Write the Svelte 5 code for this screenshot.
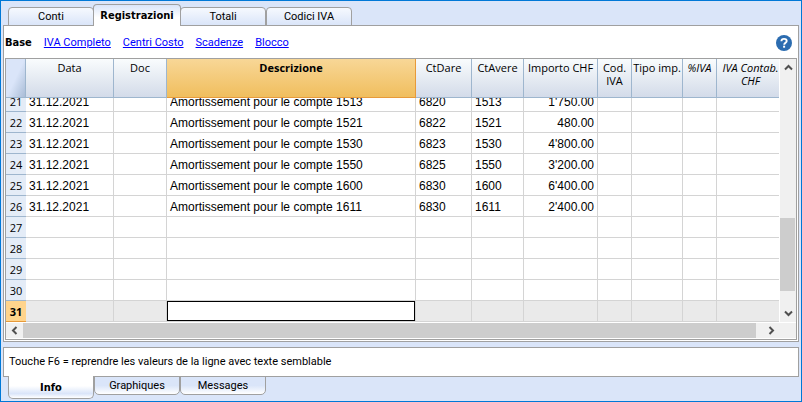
<script>
  const tabs = ['Conti', 'Registrazioni', 'Totali', 'Codici IVA'];
  const views = ['IVA Completo', 'Centri Costo', 'Scadenze', 'Blocco'];
  const bottomTabs = ['Info', 'Graphiques', 'Messages'];
  const columns = [
    { label: 'Data', width: 88 },
    { label: 'Doc', width: 53 },
    { label: 'Descrizione', width: 249, selected: true },
    { label: 'CtDare', width: 56 },
    { label: 'CtAvere', width: 52 },
    { label: 'Importo CHF', width: 74 },
    { label: 'Cod. IVA', width: 34 },
    { label: 'Tipo imp.', width: 51 },
    { label: '%IVA', width: 34, computed: true },
    { label: 'IVA Contab. CHF', computed: true }
  ];
  const entry = (n, debit, account, amount) => ({
    n,
    cells: ['31.12.2021', '', `Amortissement pour le compte ${account}`, debit, account, amount, '', '', '', '']
  });
  const rows = [
    entry(21, '6820', '1513', "1'750.00"),
    entry(22, '6822', '1521', '480.00'),
    entry(23, '6823', '1530', "4'800.00"),
    entry(24, '6825', '1550', "3'200.00"),
    entry(25, '6830', '1600', "6'400.00"),
    entry(26, '6830', '1611', "2'400.00"),
    ...[27, 28, 29, 30, 31].map((n) => ({ n, cells: Array(10).fill('') }))
  ];
  const currentRow = 31;
  let activeTab = $state('Registrazioni');
  let activeBottom = $state('Info');
</script>

<main class="window">
  <nav class="tabs top">
    {#each tabs as tab}
      <button class:active={tab === activeTab} onclick={() => (activeTab = tab)}>{tab}</button>
    {/each}
  </nav>

  <section class="pane">
    <div class="views">
      <strong>Base</strong>
      {#each views as view}
        <a href="#view">{view}</a>
      {/each}
      <button class="help" aria-label="Help">
        <svg width="16" height="16" viewBox="0 0 16 16">
          <circle cx="8" cy="8" r="8" fill="#2b6cb0" />
          <path d="M5.4 6.2C5.5 4.6 6.5 3.9 8 3.9c1.6 0 2.7.8 2.7 2.1 0 1.6-2.5 1.8-2.5 3.7" fill="none" stroke="#fff" stroke-width="1.9" />
          <rect x="7.1" y="10.7" width="2" height="2" fill="#fff" />
        </svg>
      </button>
    </div>

    <div class="grid">
      <div class="middle">
        <div class="viewport">
          <table>
            <colgroup>
              <col style:width="20px" />
              {#each columns as col}
                <col style:width={col.width ? `${col.width}px` : 'auto'} />
              {/each}
            </colgroup>
            <thead>
              <tr>
                <th class="corner"></th>
                {#each columns as col}
                  <th class:selected={col.selected} class:computed={col.computed}>{col.label}</th>
                {/each}
              </tr>
            </thead>
            <tbody>
              {#each rows as row, r}
                <tr class:clipped={r === 0} class:current={row.n === currentRow}>
                  <th><div>{row.n}</div></th>
                  {#each row.cells as cell, c}
                    {#if row.n === currentRow && c === 2}
                      <td class="editing"><input aria-label="Descrizione" /></td>
                    {:else}
                      <td class:amount={c === 5}><div>{cell}</div></td>
                    {/if}
                  {/each}
                </tr>
              {/each}
            </tbody>
          </table>
        </div>
        <div class="scroll vertical">
          <button aria-label="Scroll up"><svg width="9" height="7" viewBox="0 0 9 7"><path d="M1 5.5 4.5 2 8 5.5" /></svg></button>
          <div class="track"><div class="thumb"></div></div>
          <button aria-label="Scroll down"><svg width="9" height="7" viewBox="0 0 9 7"><path d="M1 1.5 4.5 5 8 1.5" /></svg></button>
        </div>
      </div>
      <div class="scroll horizontal">
        <button aria-label="Scroll left"><svg width="7" height="9" viewBox="0 0 7 9"><path d="M5.5 1 2 4.5 5.5 8" /></svg></button>
        <div class="track"><div class="thumb"></div></div>
        <button aria-label="Scroll right"><svg width="7" height="9" viewBox="0 0 7 9"><path d="M1.5 1 5 4.5 1.5 8" /></svg></button>
      </div>
    </div>
  </section>

  <section class="info">Touche F6 = reprendre les valeurs de la ligne avec texte semblable</section>

  <nav class="tabs bottom">
    {#each bottomTabs as tab}
      <button class:active={tab === activeBottom} onclick={() => (activeBottom = tab)}>{tab}</button>
    {/each}
  </nav>
</main>

<style>
  :global(body) {
    background: #dae5f9;
  }
  * {
    box-sizing: border-box;
  }
  button {
    font: inherit;
    color: inherit;
    padding: 0;
    border: 0;
    background: none;
  }
  .window {
    min-height: 100vh;
    padding: 3px 2px 0;
    border: 1px solid #0078d7;
    background: #dae5f9;
    color: #000;
    font: 11px/14px Roboto, 'Noto Sans', sans-serif;
  }
  .tabs {
    display: flex;
    padding: 0 5px;
  }
  .tabs button {
    width: 86px;
    height: 18px;
    border: 1px solid #a0a0a0;
  }
  .tabs button.active {
    font-family: 'DejaVu Sans Condensed', 'DejaVu Sans', sans-serif;
    font-weight: bold;
    position: relative;
  }
  .top {
    align-items: flex-end;
    margin-bottom: -1px;
  }
  .top button {
    height: 19px;
    padding-top: 1px;
    border-radius: 4px 4px 0 0;
    background: linear-gradient(#f6f9fe, #dae5f9);
  }
  .top button.active {
    width: 88px;
    height: 22px;
    margin: 0 -1px;
    border-bottom: 0;
    background: linear-gradient(#dae5f9, #fff 60%);
  }
  .bottom {
    align-items: flex-start;
    margin-top: -1px;
  }
  .bottom button {
    height: 19px;
    border-radius: 0 0 5px 5px;
    background: linear-gradient(#dae5f9, #dae5f9 50%, #fff);
  }
  .bottom button.active {
    height: 23px;
    padding-top: 2px;
    border-top: 0;
    background: linear-gradient(#fff 45%, #dae5f9 80%, #fff);
  }
  .pane {
    border: 1px solid #a0a0a0;
    background: #fff;
    padding: 0 1px 1px;
  }
  .views {
    display: flex;
    align-items: center;
    gap: 12px;
    height: 32px;
    padding: 2px 5px 0 0;
  }
  .views strong {
    font-family: 'DejaVu Sans Condensed', 'DejaVu Sans', sans-serif;
  }
  .views a {
    color: #0000ff;
  }
  .help {
    margin-left: auto;
    width: 16px;
    height: 16px;
  }
  .help svg {
    display: block;
  }
  .grid {
    border: 1px solid #a0a0a0;
    background: #fff;
  }
  .middle {
    display: flex;
  }
  .viewport {
    flex: 1;
    min-width: 0;
    overflow: hidden;
    margin-right: 1px;
  }
  table {
    width: calc(100% + 6px);
    table-layout: fixed;
    border-collapse: separate;
    border-spacing: 0;
  }
  thead th {
    height: 39px;
    padding: 2px 0 0;
    vertical-align: top;
    font: 11px/13px 'Open Sans', 'Noto Sans', sans-serif;
    border-right: 1px solid #9eb6ce;
    border-bottom: 1px solid #9eb6ce;
    background: linear-gradient(#f9fcfd, #d3dbe9);
  }
  thead .selected {
    font-weight: bold;
    background: linear-gradient(#f8d797, #f0be5e);
    border-right-color: #e79a3a;
    border-bottom-color: #e79a3a;
  }
  thead .computed {
    font-style: italic;
  }
  thead .corner {
    background: linear-gradient(115deg, #dae5f9 50%, #a9bcd6);
  }
  tbody th {
    height: 21px;
    padding: 2px 0 0;
    font: 11px/18px 'Open Sans', 'Noto Sans', sans-serif;
    background: #e4ecf7;
    border-bottom: 1px solid #9eb6ce;
  }
  td {
    height: 21px;
    padding: 2px 3px 0;
    font: 12px/18px 'Liberation Sans', Arial, sans-serif;
    white-space: nowrap;
    border-right: 1px solid #d4d4d4;
    border-bottom: 1px solid #d4d4d4;
  }
  .amount {
    text-align: right;
  }
  .clipped th,
  .clipped td {
    height: 14px;
    padding-top: 0;
  }
  .clipped div {
    display: flex;
    align-items: flex-end;
    justify-content: flex-start;
    height: 13px;
    overflow: hidden;
  }
  .clipped th div {
    justify-content: center;
  }
  .clipped .amount div {
    justify-content: flex-end;
  }
  .current th {
    font-weight: bold;
    background: #ffd48c;
    border-color: #e79a3a;
  }
  .current td {
    background: #eaeaea;
  }
  .current .editing {
    padding: 0;
  }
  .editing input {
    display: block;
    width: 100%;
    height: 20px;
    padding: 0 2px;
    font: inherit;
    border: 1px solid #000;
    border-radius: 0;
    background: #fff;
    outline: 0;
  }
  .scroll {
    display: flex;
    background: #f0f0f0;
  }
  .scroll button {
    display: flex;
    align-items: center;
    justify-content: center;
    flex: none;
  }
  .scroll path {
    fill: none;
    stroke: #505050;
    stroke-width: 2;
  }
  .track {
    display: flex;
    flex: 1;
  }
  .thumb {
    background: #cdcdcd;
  }
  .vertical {
    flex-direction: column;
    width: 16px;
  }
  .vertical button {
    height: 17px;
  }
  .vertical .track {
    flex-direction: column;
    justify-content: flex-end;
    padding-bottom: 14px;
  }
  .vertical .thumb {
    height: 34%;
    margin-right: 1px;
  }
  .horizontal {
    height: 17px;
    border-top: 1px solid #fff;
    border-bottom: 1px solid #fff;
  }
  .horizontal button {
    width: 17px;
  }
  .horizontal button:last-child {
    margin-right: 16px;
  }
  .horizontal .thumb {
    flex: 1;
  }
  .horizontal .track {
    padding-right: 7px;
  }
  .info {
    margin-top: 5px;
    height: 30px;
    padding: 7px 5px;
    border: 1px solid #a0a0a0;
    background: #fff;
  }
</style>
